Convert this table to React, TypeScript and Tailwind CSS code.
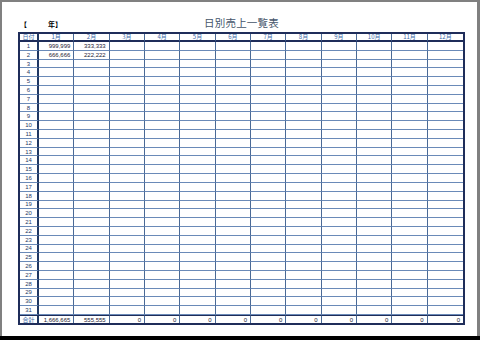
const months = ['1月', '2月', '3月', '4月', '5月', '6月', '7月', '8月', '9月', '10月', '11月', '12月'];

const data: Record<number, string[]> = {
  1: ['999,999', '333,333'],
  2: ['666,666', '222,222'],
};

const totals = ['1,666,665', '555,555', '0', '0', '0', '0', '0', '0', '0', '0', '0', '0'];

const days = Array.from({ length: 31 }, (_, i) => i + 1);

const jp = { fontFamily: '"Noto Sans CJK JP", "Liberation Sans", sans-serif' };
const num = { fontFamily: '"Liberation Sans", "Noto Sans CJK JP", sans-serif' };

function SalesSheet() {
  return (
    <div className="flex flex-col">
      {/* heading */}
      <div className="grid h-[30px] grid-cols-[1fr_auto_1fr] items-end pb-[4px]">
        <div className="flex items-end pl-[2px] text-[7px] font-bold leading-none text-black" style={jp}>
          <span>【</span>
          <span className="pl-[21px]">年】</span>
        </div>
        <div className="text-[10.5px] leading-none tracking-[0.2px] text-[#44546a]" style={jp}>
          日別売上一覧表
        </div>
        <div />
      </div>

      {/* sheet */}
      <div className="grid h-[293px] grid-cols-[19px_repeat(12,minmax(0,1fr))] grid-rows-[8px_repeat(31,minmax(0,1fr))_8px] border-2 border-[#1f2d5a]">
        <div className="flex items-center justify-center border-r-2 border-b-2 border-r-[#1f3864] border-b-[#1f2d5a] text-[6px] leading-none text-[#3d6aa8]" style={jp}>
          日付
        </div>
        {months.map((m, i) => (
          <div
            key={m}
            className={`flex items-center justify-center border-b-2 border-b-[#1f2d5a] text-[6px] leading-none text-[#3d6aa8] ${i < 11 ? 'border-r border-r-[#4a6a96]' : ''}`}
            style={jp}
          >
            {m}
          </div>
        ))}

        {days.map((d) => (
          <div key={d} className="contents">
            <div
              className="flex items-center justify-center border-r-2 border-b border-r-[#1f3864] border-b-[#6a8ab8] text-[6px] leading-none text-[#1f3864]"
              style={num}
            >
              {d}
            </div>
            {months.map((m, i) => (
              <div
                key={m}
                className={`flex items-center justify-end border-b border-b-[#6a8ab8] pr-[3px] text-[6px] leading-none text-[#1c2233] ${i < 11 ? 'border-r border-r-[#4a6a96]' : ''}`}
                style={num}
              >
                {data[d]?.[i] ?? ''}
              </div>
            ))}
          </div>
        ))}

        <div className="flex items-center justify-center border-t border-r-2 border-t-[#1f2d5a] border-r-[#1f3864] text-[6px] leading-none text-[#3d6aa8]" style={jp}>
          合計
        </div>
        {totals.map((t, i) => (
          <div
            key={i}
            className={`flex items-center justify-end border-t border-t-[#1f2d5a] pr-[3px] text-[6px] leading-none text-[#1c2233] ${i < 11 ? 'border-r border-r-[#4a6a96]' : ''}`}
            style={num}
          >
            {t}
          </div>
        ))}
      </div>
    </div>
  );
}

export default function App() {
  return (
    <div className="h-[340px] w-[480px] bg-[#808080] pt-[2px] pr-[3px] pl-[2px]">
      <div className="h-[334px] bg-white pt-0 pr-[12px] pl-[16px]">
        <SalesSheet />
      </div>
      <div className="h-[4px] w-[480px] -ml-[2px] bg-black" />
    </div>
  );
}
